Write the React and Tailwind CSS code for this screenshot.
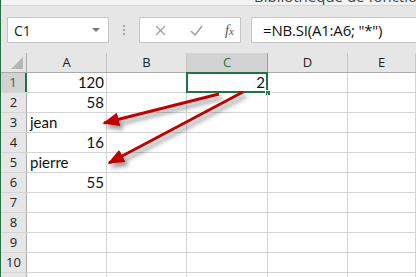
import React from "react";

const COLS = ["A", "B", "C", "D", "E"];
const WIDTHS = ["w-[80px]", "w-[80px]", "w-[81px]", "w-[80px]", "flex-1"];

const DATA = {
  1: { A: { v: "120", n: true }, C: { v: "2", n: true } },
  2: { A: { v: "58", n: true } },
  3: { A: { v: "jean" } },
  4: { A: { v: "16", n: true } },
  5: { A: { v: "pierre" } },
  6: { A: { v: "55", n: true } },
};

function Arrows() {
  return (
    <svg
      className="absolute left-[-1px] top-0 pointer-events-none"
      width="416"
      height="277"
      viewBox="0 0 416 277"
    >
      <defs>
        <filter id="shadow" x="-20%" y="-20%" width="140%" height="160%">
          <feDropShadow dx="3" dy="4" stdDeviation="2" floodColor="#000" floodOpacity="0.4" />
        </filter>
        <marker
          id="head"
          viewBox="0 0 10 10"
          refX="9"
          refY="5"
          markerWidth="5.6"
          markerHeight="4.6"
          markerUnits="strokeWidth"
          orient="auto"
          preserveAspectRatio="none"
        >
          <path d="M0,0 L10,5 L0,10 z" fill="#c00000" />
        </marker>
      </defs>
      <g filter="url(#shadow)">
        <line x1="219" y1="94" x2="104" y2="123" stroke="#c00000" strokeWidth="3" markerEnd="url(#head)" />
        <line x1="243" y1="92" x2="109" y2="163" stroke="#c00000" strokeWidth="3" markerEnd="url(#head)" />
      </g>
    </svg>
  );
}

export default function App() {
  const rows = [1, 2, 3, 4, 5, 6, 7, 8, 9, 10, 11];

  return (
    <div className="relative w-[416px] h-[277px] overflow-hidden bg-white border-l border-[#217346] font-['Lato',sans-serif]">
      {/* ribbon bottom */}
      <div className="h-[6px] bg-[#f3f3f3] border-b border-[#d6d6d6] relative overflow-hidden">
        <span className="absolute left-[253px] top-[-11px] whitespace-nowrap text-[15px] text-[#444] font-['Open_Sans',sans-serif] leading-[15px]">
          Bibliothèque de fonctions
        </span>
      </div>

      {/* formula bar */}
      <div className="h-[47px] bg-[#e6e6e6] flex items-start pt-[11px]">
        <div className="ml-[6px] w-[102px] h-[26px] bg-white border border-[#c6c6c6] flex items-center justify-between pl-[6px] pr-[8px]">
          <span className="text-[14px] text-[#222] font-['Open_Sans',sans-serif]">C1</span>
          <span className="w-0 h-0 border-l-[4px] border-r-[4px] border-t-[4px] border-l-transparent border-r-transparent border-t-[#777]" />
        </div>
        <div className="w-[30px] h-[26px] flex flex-col items-center justify-center gap-[2px]">
          <span className="w-[2px] h-[2px] bg-[#a8a8a8]" />
          <span className="w-[2px] h-[2px] bg-[#a8a8a8]" />
          <span className="w-[2px] h-[2px] bg-[#a8a8a8]" />
        </div>
        <div className="w-[102px] h-[26px] bg-white border border-[#c6c6c6] flex items-center">
          <svg className="ml-[15px]" width="11" height="11" viewBox="0 0 11 11">
            <path d="M1 1 L10 10 M10 1 L1 10" stroke="#a3a3a3" strokeWidth="1.4" />
          </svg>
          <svg className="ml-[24px]" width="13" height="11" viewBox="0 0 13 11">
            <path d="M1 6 L5 10 L12 1" stroke="#a3a3a3" strokeWidth="1.6" fill="none" />
          </svg>
          <span className="ml-[22px] text-[14px] italic text-[#555] font-['Liberation_Serif',serif]">
            f<span className="text-[11px]">x</span>
          </span>
        </div>
        <div className="ml-[10px] flex-1 h-[26px] bg-white border border-[#c6c6c6] border-r-0 flex items-center pl-[11px]">
          <span className="text-[15px] text-[#111] font-['Open_Sans',sans-serif] tracking-[-0.2px]">
            =NB.SI(A1:A6; "*")
          </span>
        </div>
      </div>

      {/* grid */}
      <div className="flex flex-col">
        <div className="flex h-[20px] bg-[#e6e6e6] border-b border-[#ababab] font-['Open_Sans',sans-serif] text-[13px]">
          <div className="w-[26px] border-r border-[#ababab] relative">
            <svg className="absolute right-[3px] bottom-[3px]" width="12" height="12" viewBox="0 0 12 12">
              <path d="M12 0 L12 12 L0 12 z" fill="#b7b7b7" />
            </svg>
          </div>
          {COLS.map((c, i) => (
            <div
              key={c}
              className={`${WIDTHS[i]} flex items-center justify-center border-r ${
                c === "C"
                  ? "bg-[#d2d2d2] text-[#217346] border-[#9b9b9b]"
                  : "text-[#222] border-[#c8c8c8]"
              }`}
            >
              {c}
            </div>
          ))}
        </div>

        {rows.map((r) => (
          <div key={r} className="flex h-[20px] border-b border-[#d4d4d4]">
            <div
              className={`w-[26px] flex items-center justify-center text-[13px] font-['Open_Sans',sans-serif] ${
                r === 1
                  ? "bg-[#d2d2d2] text-[#217346] border-r-2 border-[#217346]"
                  : "bg-[#e6e6e6] text-[#222] border-r border-[#ababab]"
              }`}
            >
              {r < 11 ? r : null}
            </div>
            {COLS.map((c, i) => {
              const cell = DATA[r] && DATA[r][c];
              const selected = r === 1 && c === "C";
              return (
                <div
                  key={c}
                  className={`${WIDTHS[i]} relative flex items-center border-r border-[#d4d4d4] text-[15px] text-[#111] ${
                    cell && cell.n ? "justify-end pr-[2px]" : "justify-start pl-[3px]"
                  }`}
                >
                  {cell ? cell.v : null}
                  {selected && (
                    <>
                      <span className="absolute left-[-1px] top-[-1px] right-[-1px] bottom-[-1px] border-2 border-[#217346]" />
                      <span className="absolute right-[-4px] bottom-[-4px] w-[6px] h-[6px] bg-[#217346] border border-white" />
                    </>
                  )}
                </div>
              );
            })}
          </div>
        ))}
      </div>

      <Arrows />
    </div>
  );
}
